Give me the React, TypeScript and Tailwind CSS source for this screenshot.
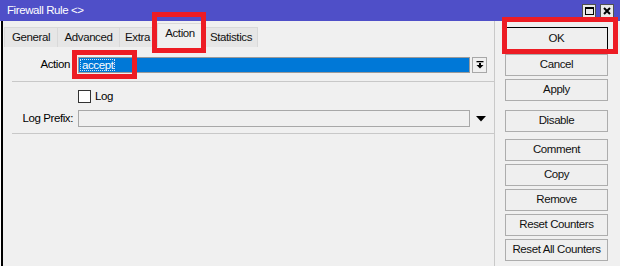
import React from "react";

const FONT = { fontFamily: '"Liberation Sans", Arial, sans-serif' };

const tabs = [
  { label: "General", w: "w-[54px]" },
  { label: "Advanced", w: "w-[63px]" },
  { label: "Extra", w: "w-[37px]" },
];

function Btn({ children, className = "" }: { children: React.ReactNode; className?: string }) {
  return (
    <div
      className={`h-[22px] w-[103px] flex items-center justify-center border border-[#adadad] bg-[#efefef] text-[11.5px] tracking-[-0.4px] text-[#111] ${className}`}
    >
      {children}
    </div>
  );
}

export default function App() {
  return (
    <div className="relative w-[620px] h-[266px] overflow-hidden bg-[#f0f0f0] text-black" style={FONT}>
      {/* title bar */}
      <div className="h-[21px] bg-[#4f4fc8] flex items-center justify-between pl-[7px] pr-[6px]">
        <span className="text-white text-[11.5px] tracking-[-0.4px] leading-none">Firewall Rule &lt;&gt;</span>
        <div className="flex gap-[4px] items-center pt-[1px]">
          <div className="w-[14px] h-[14px] bg-[#e8e8e8] border border-[#505050] flex items-center justify-center">
            <div className="w-[9px] h-[8px] border border-black border-t-2" />
          </div>
          <div className="w-[14px] h-[14px] bg-[#e8e8e8] border border-[#505050] flex items-center justify-center">
            <svg width="8" height="8" viewBox="0 0 8 8">
              <path d="M1 1 L7 7 M7 1 L1 7" stroke="black" strokeWidth="2" />
            </svg>
          </div>
        </div>
      </div>

      <div className="flex h-[245px]">
        {/* left edge of window behind */}
        <div className="w-[1px] bg-white" />
        <div className="w-[2px] bg-black" />

        {/* main panel */}
        <div className="w-[492px] border-r border-[#c9c9c9] flex flex-col">
          {/* tabs */}
          <div className="h-[26px] flex items-end pl-[1px]">
            {tabs.map((t) => (
              <div
                key={t.label}
                className={`${t.w} h-[20px] -mr-[1px] border border-b-0 border-[#d9d9d9] bg-[#e6e6e6] flex items-center justify-center text-[11.5px] tracking-[-0.4px] text-[#111]`}
              >
                {t.label}
              </div>
            ))}
            <div className="w-[46px] h-[24px] ml-[2px] border border-b-0 border-[#d9d9d9] bg-[#f0f0f0] flex items-center justify-center text-[11.5px] tracking-[-0.4px] text-[#111] pb-[3px]">
              Action
            </div>
            <div className="w-[54px] h-[20px] ml-[1px] border border-b-0 border-[#d9d9d9] bg-[#e6e6e6] flex items-center justify-center text-[11.5px] tracking-[-0.4px] text-[#111]">
              Statistics
            </div>
          </div>

          {/* content */}
          <div className="flex-1 flex flex-col">
            <div className="mt-[10px] h-[16px] flex items-center">
              <span className="w-[67px] text-right text-[11.5px] tracking-[-0.4px]">Action</span>
              <div className="ml-[8px] w-[392px] h-[16px] border border-[#9a9a9a] bg-[#0078d7] p-[1px] flex items-center">
                <span className="h-[12px] px-[1px] border border-dotted border-[#cfe4f7] text-white text-[11.5px] tracking-[-0.4px] leading-[10px] flex items-center">
                  accept
                </span>
              </div>
              <div className="ml-[2px] w-[15px] h-[16px] border border-[#a8a8a8] bg-[#f0f0f0] flex items-center justify-center">
                <svg width="8" height="8" viewBox="0 0 8 8">
                  <rect x="0.5" y="0" width="7" height="1.3" fill="black" />
                  <rect x="3" y="2" width="2" height="2" fill="black" />
                  <path d="M0.5 4 L7.5 4 L4 7.5 Z" fill="black" />
                </svg>
              </div>
            </div>

            <div className="mt-[8px] ml-[9px] h-[1px] bg-[#c8c8c8]" />

            <div className="mt-[8px] flex items-center h-[13px]">
              <div className="ml-[75px] w-[13px] h-[13px] border border-[#333] bg-white" />
              <span className="ml-[4px] text-[11.5px] tracking-[-0.4px]">Log</span>
            </div>

            <div className="mt-[7px] h-[17px] flex items-center">
              <span className="w-[70px] text-right text-[11.5px] tracking-[-0.4px]">Log Prefix:</span>
              <div className="ml-[5px] w-[392px] h-[17px] border border-[#a8a8a8] bg-[#f0f0f0]" />
              <div className="ml-[3px] w-[15px] flex items-center justify-center">
                <svg width="10" height="6" viewBox="0 0 10 6">
                  <path d="M0 0 L10 0 L5 5.5 Z" fill="black" />
                </svg>
              </div>
            </div>

            <div className="mt-[6px] ml-[9px] h-[1px] bg-[#c8c8c8]" />
          </div>
        </div>

        {/* buttons */}
        <div className="pl-[10px] pt-[6px] flex flex-col gap-[3px]">
          <Btn className="h-[24px] border-black">OK</Btn>
          <Btn>Cancel</Btn>
          <Btn>Apply</Btn>
          <Btn className="mt-[6px]">Disable</Btn>
          <Btn className="mt-[4px]">Comment</Btn>
          <Btn>Copy</Btn>
          <Btn>Remove</Btn>
          <Btn>Reset Counters</Btn>
          <Btn>Reset All Counters</Btn>
        </div>
      </div>

      {/* red highlight boxes */}
      <div className="absolute left-[152px] top-[12px] w-[54px] h-[41px] border-[5px] border-[#ed1c24]" />
      <div className="absolute left-[72px] top-[50px] w-[65px] h-[29px] border-[5px] border-[#ed1c24]" />
      <div className="absolute left-[502px] top-[17px] w-[116px] h-[37px] border-[5px] border-[#ed1c24]" />
    </div>
  );
}
